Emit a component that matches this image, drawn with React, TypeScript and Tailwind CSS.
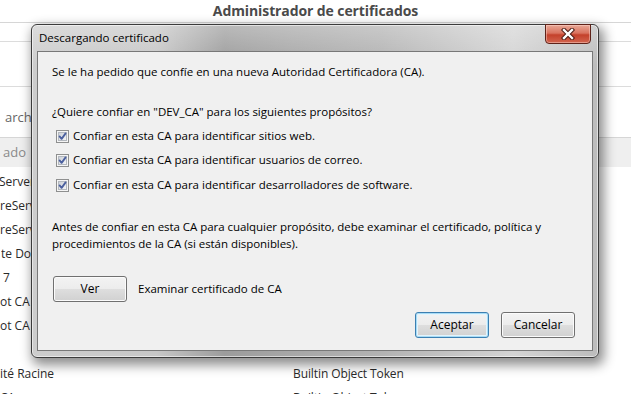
import React from 'react';

// filas de la lista de fondo (solo se ve el borde izquierdo y una columna)
const rows: { left: string; right?: string; pad?: string }[] = [
  { left: 'Server Authority', pad: '-ml-[1px]' },
  { left: 'reServer Root' },
  { left: 'reServer Global' },
  { left: 'te Domain', pad: 'ml-[1px]' },
  { left: '7', pad: 'ml-[3px]' },
  { left: 'ot CA' },
  { left: 'ot CA' },
  { left: '' },
  { left: 'ité Racine', right: 'Builtin Object Token' },
  { left: 'CA', right: 'Builtin Object Token' },
];

function CheckBox() {
  return (
    <svg width="13" height="13" viewBox="0 0 13 13" className="shrink-0">
      <defs>
        <linearGradient id="cbfill" x1="0" y1="0" x2="1" y2="1">
          <stop offset="0" stopColor="#c9ced6" />
          <stop offset="1" stopColor="#f7f7f7" />
        </linearGradient>
      </defs>
      <rect x="0.5" y="0.5" width="12" height="12" fill="#f5f5f5" stroke="#8e8f8f" />
      <rect x="2.5" y="2.5" width="8" height="8" fill="url(#cbfill)" stroke="#b3b8bf" />
      <path d="M3.6 6.4 L5.6 8.9 L9.6 3.4" fill="none" stroke="#4a5f9e" strokeWidth="1.8" strokeLinecap="round" strokeLinejoin="round" />
    </svg>
  );
}

function WinButton({ label, primary }: { label: string; primary?: boolean }) {
  return (
    <button
      className={
        'h-[26px] w-[74px] rounded-[3px] border text-[12px] text-black bg-[linear-gradient(180deg,#f3f3f3_0%,#ececec_48%,#dedede_50%,#d1d1d1_100%)] ' +
        (primary
          ? 'border-[#3c7fb1] shadow-[inset_0_0_0_1px_#a8dcf6,inset_0_0_0_2px_#e4f4fc]'
          : 'border-[#707070] shadow-[inset_0_0_0_1px_#fbfbfb]')
      }
    >
      {label}
    </button>
  );
}

export default function App() {
  return (
    <div className="relative w-[631px] h-[394px] overflow-hidden bg-white font-['Open_Sans',sans-serif] text-[12px] text-[#222]">
      {/* página de fondo */}
      <div className="h-[23px] border-b border-[#d6d6d6] flex items-center justify-center text-[14px] font-bold text-[#4a4a4a] leading-none">
        <span className="tracking-[-0.1px]">Administrador de certificados</span>
      </div>
      <div className="h-[19px] border-b border-[#dcdcdc]" />
      <div className="h-[45px] border-b border-[#dcdcdc]" />
      <div className="h-[50px] pl-[5px] pt-[21px] text-[13px] leading-[18px] text-[#666]">archivos</div>
      <div className="h-[30px] border-t border-[#d6d6d6] bg-[#efefef] pl-[3px] flex items-center text-[13px] text-[#8a8a8a]">
        ado
      </div>
      <div className="pt-[3px]">
        {rows.map((r, i) => (
          <div key={i} className="grid grid-cols-[293px_1fr] h-[24px] items-center text-[12px] text-[#2a2a2a]">
            <span className={'whitespace-nowrap overflow-hidden ' + (r.pad ?? '')}>{r.left}</span>
            <span className="whitespace-nowrap tracking-[-0.1px]">{r.right}</span>
          </div>
        ))}
      </div>

      {/* ventana de diálogo */}
      <div className="absolute left-[31px] top-[24px] w-[568px] h-[334px] rounded-[6px] border border-[#3b3b3b] shadow-[3px_5px_12px_2px_rgba(0,0,0,0.45),inset_0_0_0_1px_rgba(255,255,255,0.55)] bg-[linear-gradient(180deg,rgba(255,255,255,0.3)_0%,rgba(255,255,255,0)_12%),linear-gradient(90deg,#cdcdcd_0%,#c7c7c7_22%,#9c9c9c_34%,#a7a7a7_46%,#b3b3b3_62%,#cacaca_78%,#d4d4d4_85%,#bcbcbc_100%)]">
        <div className="h-[26px] pl-[7px] flex items-center text-[11.5px] text-black">Descargando certificado</div>

        {/* botón cerrar */}
        <div className="absolute left-[513px] top-[-1px] w-[46px] h-[20px] rounded-b-[4px] border border-[#5e2219] bg-[linear-gradient(180deg,#e9a897_0%,#d9735f_45%,#c4412b_55%,#d2654f_100%)] shadow-[inset_0_0_0_1px_rgba(255,220,210,0.45)] flex items-center justify-center">
          <svg width="14" height="12" viewBox="0 0 14 12">
            <path d="M3 2 L11 10 M11 2 L3 10" stroke="#4a1a12" strokeWidth="4.4" strokeLinecap="square" />
            <path d="M3 2 L11 10 M11 2 L3 10" stroke="#ffffff" strokeWidth="2.4" strokeLinecap="square" />
          </svg>
        </div>

        {/* área cliente */}
        <div className="mx-[5px] h-[300px] border border-[#787878] bg-[#f0f0f0] flex flex-col pt-[12px] pl-[14px] pr-[17px] text-[11.5px] leading-[16px] text-black">
          <p>Se le ha pedido que confíe en una nueva Autoridad Certificadora (CA).</p>
          <p className="mt-[24px]">¿Quiere confiar en "DEV_CA" para los siguientes propósitos?</p>
          <div className="mt-[8px] pl-[4px] flex items-center gap-[4px]">
            <CheckBox />
            <span>Confiar en esta CA para identificar sitios web.</span>
          </div>
          <div className="mt-[8px] pl-[4px] flex items-center gap-[4px]">
            <CheckBox />
            <span>Confiar en esta CA para identificar usuarios de correo.</span>
          </div>
          <div className="mt-[9px] pl-[4px] flex items-center gap-[4px]">
            <CheckBox />
            <span>Confiar en esta CA para identificar desarrolladores de software.</span>
          </div>
          <p className="mt-[25px] leading-[17px] tracking-[-0.05px]">
            Antes de confiar en esta CA para cualquier propósito, debe examinar el certificado, política y
            <br />
            procedimientos de la CA (si están disponibles).
          </p>
          <div className="mt-[24px] pl-[1px] flex items-center gap-[11px]">
            <WinButton label="Ver" />
            <span className="-mt-[1px]">Examinar certificado de CA</span>
          </div>
          <div className="mt-[10px] flex justify-end gap-[12px]">
            <WinButton label="Aceptar" primary />
            <WinButton label="Cancelar" />
          </div>
        </div>
      </div>
    </div>
  );
}
